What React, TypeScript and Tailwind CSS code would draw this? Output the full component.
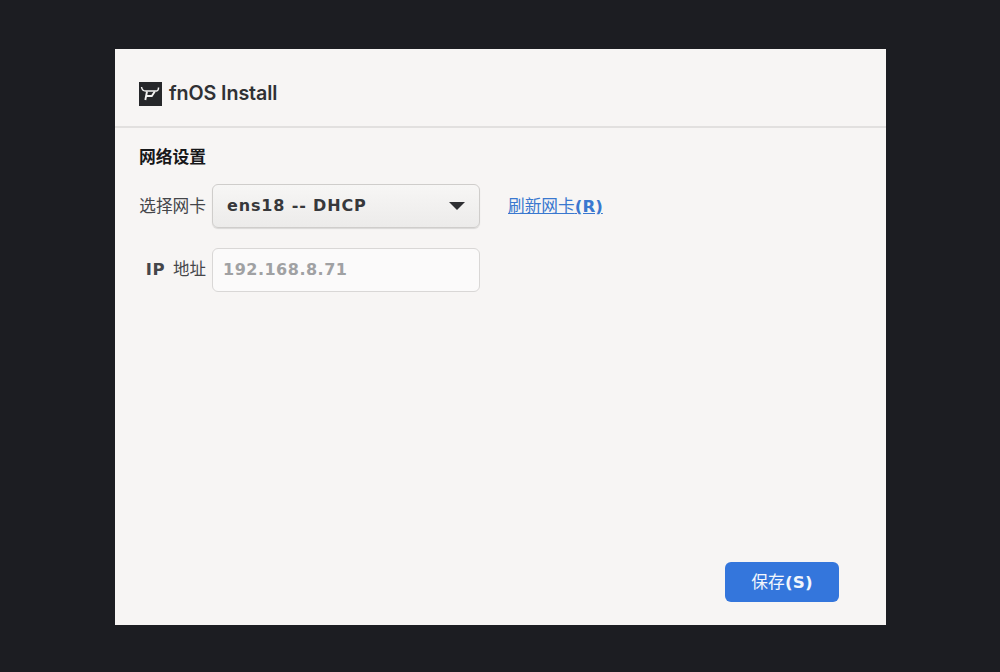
export default function App() {
  const cjk = "font-['DejaVu_Sans','Noto_Sans_CJK_SC',sans-serif]";
  return (
    <div className="w-[1000px] h-[672px] bg-[#1c1d22] pt-[49px] pl-[115px] overflow-hidden">
      <div className="w-[771px] h-[576px] bg-[#f7f5f4] flex flex-col">
        <header className="h-[79px] shrink-0 border-b-2 border-[#e2e0df] flex items-center pl-[24px] gap-[7px] pt-[11px]">
          <svg width="23" height="24" viewBox="0 0 23 24" className="shrink-0 mt-[1px]">
            <rect width="23" height="24" fill="#26272a" />
            <path d="M2.5 5 C3 8 4 9 6.5 9 H17.5 C18.8 9 19.6 7.5 19.5 5.5" fill="none" stroke="#f4f3f2" strokeWidth="1.5" />
            <path d="M8 9.5 L6.3 18 M7.3 14 H12.8 L15.8 9.5" fill="none" stroke="#f4f3f2" strokeWidth="1.9" />
          </svg>
          <span className="font-['Inter',sans-serif] font-semibold text-[19.7px] leading-none text-[#303134] tracking-[-0.1px] mt-[2px]">fnOS Install</span>
        </header>
        <main className="flex-1 relative pl-[24px] flex flex-col">
          <h2 className={`${cjk} font-bold text-[16.8px] leading-[20px] text-[#17181a] mt-[19px]`}>网络设置</h2>
          <div className="flex items-center mt-[17px] h-[44px]">
            <label className={`${cjk} w-[67px] text-[16.7px] leading-[22px] text-[#45464a] text-right whitespace-nowrap`}>选择网卡</label>
            <div className="ml-[6px] w-[268px] h-[44px] rounded-[6px] border border-[#cfcdcb] bg-gradient-to-b from-[#f7f6f5] to-[#ecebea] shadow-[0_1px_1px_rgba(0,0,0,0.12)] flex items-center justify-between pl-[14px] pr-[14px]">
              <span className={`${cjk} font-bold text-[16px] tracking-[0.85px] text-[#37383b]`}>ens18 -- DHCP</span>
              <svg width="16" height="8" viewBox="0 0 16 8"><path d="M0 0 H16 L8 8 Z" fill="#2e2f32" /></svg>
            </div>
            <a className={`${cjk} ml-[28px] font-bold text-[16.7px] leading-[22px] text-[#3a78cf] underline whitespace-nowrap`}><span className="font-normal">刷新网卡</span>(R)</a>
          </div>
          <div className="flex items-center mt-[20px] h-[44px]">
            <label className={`${cjk} w-[67px] text-[16.5px] leading-[22px] text-[#45464a] text-right whitespace-nowrap`}><b className="tracking-[0.5px]">IP</b><span className="ml-[8px]">地址</span></label>
            <div className="ml-[6px] w-[268px] h-[44px] rounded-[6px] border border-[#d9d7d6] bg-[#fbfafa] flex items-center pl-[10px]">
              <span className={`${cjk} font-bold text-[16px] tracking-[0.5px] text-[#a0a1a3]`}>192.168.8.71</span>
            </div>
          </div>
          <button className={`${cjk} absolute right-[47px] bottom-[23px] w-[114px] h-[40px] rounded-[6px] bg-[#3476dc] text-[#f3f6fc] font-bold text-[16.7px] leading-[22px] tracking-[0.2px]`}>
            <span className="font-normal">保存</span>(S)
          </button>
        </main>
      </div>
    </div>
  );
}
